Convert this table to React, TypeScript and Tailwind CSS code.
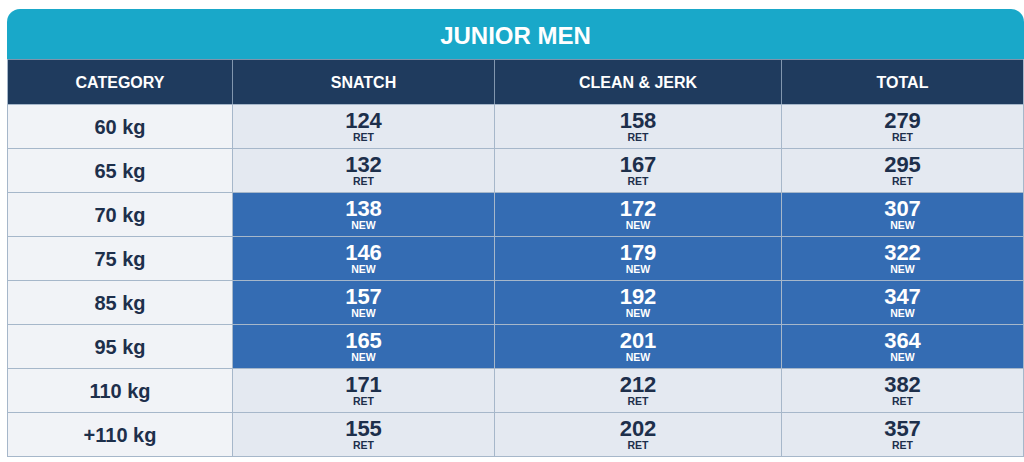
const rows = [
  { cat: "60 kg", vals: [124, 158, 279], isNew: false },
  { cat: "65 kg", vals: [132, 167, 295], isNew: false },
  { cat: "70 kg", vals: [138, 172, 307], isNew: true },
  { cat: "75 kg", vals: [146, 179, 322], isNew: true },
  { cat: "85 kg", vals: [157, 192, 347], isNew: true },
  { cat: "95 kg", vals: [165, 201, 364], isNew: true },
  { cat: "110 kg", vals: [171, 212, 382], isNew: false },
  { cat: "+110 kg", vals: [155, 202, 357], isNew: false },
];

const headers = ["CATEGORY", "SNATCH", "CLEAN & JERK", "TOTAL"];
const cols = "grid grid-cols-[224px_262px_287px_242px]";

function ValueCell({ value, isNew }: { value: number; isNew: boolean }) {
  return (
    <div
      className={`flex flex-col items-center justify-center border-l border-[#a6b7ca] ${
        isNew ? "bg-[#346cb3] text-white" : "bg-[#e4e9f1] text-[#1d2f4b]"
      }`}
    >
      <span className="text-[22px] font-bold leading-none">{value}</span>
      <span className="text-[10.5px] font-bold leading-none">
        {isNew ? "NEW" : "RET"}
      </span>
    </div>
  );
}

export default function App() {
  return (
    <div className="min-h-[462px] bg-white pt-[9px] pl-[7px] font-['Liberation_Sans',Arial,sans-serif]">
      <div className="w-[1017px] overflow-hidden rounded-t-[13px]">
        <div className="flex h-[50px] items-center justify-center bg-[#19a8c9] pt-[3px] text-[24px] font-bold text-white">
          JUNIOR MEN
        </div>
        <div className="border-x border-b border-[#a6b7ca]">
          <div className={`${cols} h-[45px] border-t border-[#7f93ab] bg-[#1f3b5e]`}>
            {headers.map((h, i) => (
              <div
                key={h}
                className={`flex items-center justify-center pt-[2px] text-[16px] font-bold text-white ${
                  i > 0 ? "border-l border-[#8196ae]" : ""
                }`}
              >
                {h}
              </div>
            ))}
          </div>
          {rows.map((r) => (
            <div key={r.cat} className={`${cols} h-[44px] border-t border-[#a6b7ca]`}>
              <div className="flex items-center justify-center bg-[#f1f3f7] text-[20px] font-bold text-[#1d2f4b]">
                {r.cat}
              </div>
              {r.vals.map((v, i) => (
                <ValueCell key={i} value={v} isNew={r.isNew} />
              ))}
            </div>
          ))}
        </div>
      </div>
    </div>
  );
}
